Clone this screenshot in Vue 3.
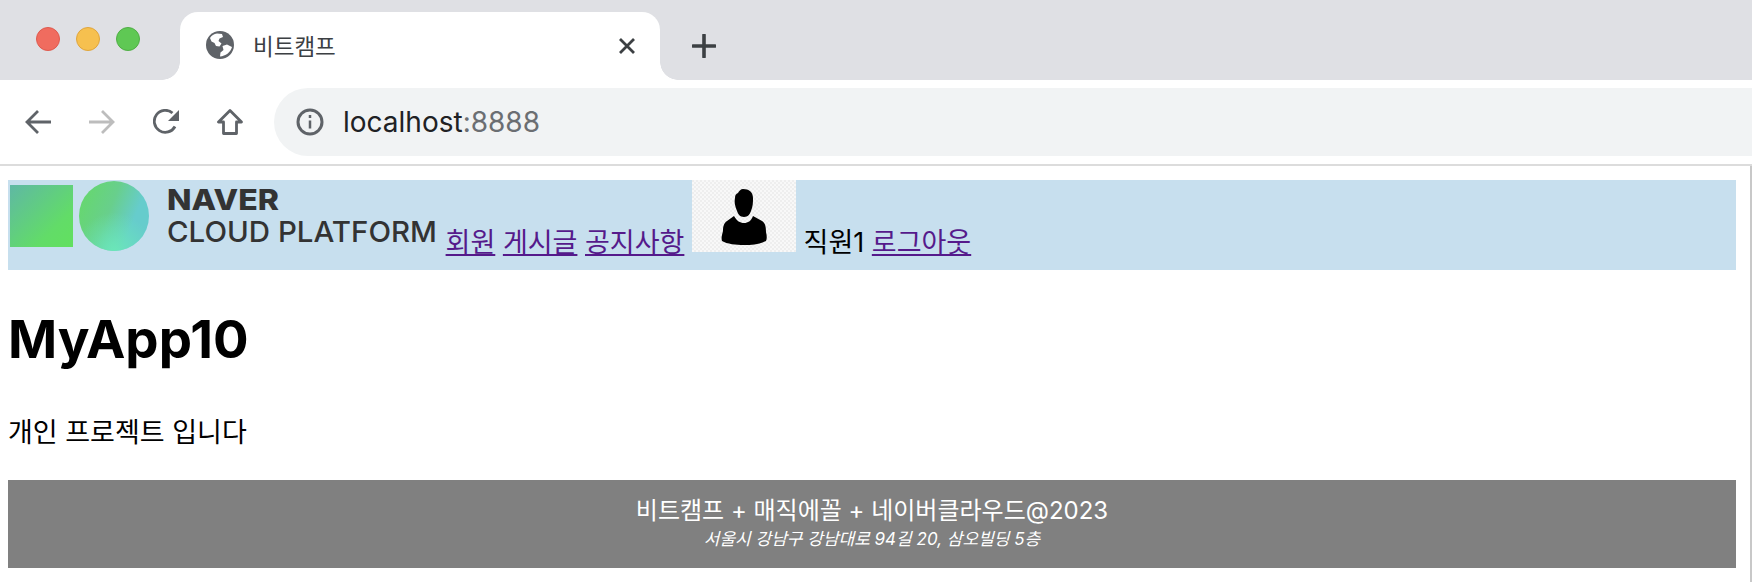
<template>
  <div class="browser">
    <div class="tabstrip">
      <div class="lights">
        <span class="light red"></span>
        <span class="light yellow"></span>
        <span class="light green"></span>
      </div>
      <div class="tab">
        <svg class="globe" width="28" height="28" viewBox="0 0 28 28">
          <circle cx="14" cy="14" r="14" fill="#5f6368" />
          <path d="M11 2.500c-3 .5-5.500 2-7 4.500l1.500 3.500 3 1.500 1.500 3 3.500.5 2-3-3-2.500 1-2.500 3.500-1.500-1-3zM26 16l-5-2.500-4.500 1.500 1 4-3 2.500-.5 4c5.500-.5 10.500-4 12-9.500z" fill="#fff" />
        </svg>
        <span class="tab-title">비트캠프</span>
        <svg class="tab-close" width="18" height="18" viewBox="0 0 18 18">
          <path d="M2 2l14 14M16 2L2 16" stroke="#3c4043" stroke-width="2.800" fill="none" />
        </svg>
      </div>
      <svg class="new-tab" width="24" height="24" viewBox="0 0 24 24">
        <path d="M12 1v22M1 12h22" stroke="#3c4043" stroke-width="3.600" stroke-linecap="round" fill="none" />
      </svg>
    </div>
    <div class="toolbar">
      <div class="nav-icons">
        <svg width="26" height="26" viewBox="0 0 26 26">
          <path d="M26 13H2M13 2L2 13l11 11" stroke="#5f6368" stroke-width="2.800" fill="none" />
        </svg>
        <svg width="26" height="26" viewBox="0 0 26 26">
          <path d="M0 13h24M13 2l11 11-11 11" stroke="#bdbdbd" stroke-width="2.800" fill="none" />
        </svg>
        <svg width="26" height="26" viewBox="0 0 26 26">
          <path d="M22 17.500A11 11 0 1 1 19.500 4" stroke="#5f6368" stroke-width="2.800" fill="none" />
          <path d="M26 1v11H15z" fill="#5f6368" />
        </svg>
        <svg width="26" height="26" viewBox="0 0 26 26">
          <path d="M13 1.500L1.500 13H6.500V24.500H19.500V13H24.500z" stroke="#5f6368" stroke-width="2.800" fill="none" stroke-linejoin="round" />
        </svg>
      </div>
      <div class="omnibox">
        <svg class="info" width="28" height="28" viewBox="0 0 28 28">
          <circle cx="14" cy="14" r="12" stroke="#5f6368" stroke-width="3" fill="none" />
          <path d="M14 12.500v8M14 7v3" stroke="#5f6368" stroke-width="2.500" fill="none" />
        </svg>
        <span class="url">localhost<span class="port">:8888</span></span>
      </div>
    </div>
    <div class="page">
      <div class="header">
        <svg class="logo" width="430" height="72" viewBox="0 0 430 72">
          <defs>
            <linearGradient id="sq" x1="0" y1="0" x2="1" y2="1">
              <stop offset="0" stop-color="#5fb8a4" />
              <stop offset="0.7" stop-color="#62dc68" />
              <stop offset="1" stop-color="#62e05f" />
            </linearGradient>
            <linearGradient id="ci" x1="0" y1="0.2" x2="1" y2="0.6">
              <stop offset="0" stop-color="#66d86c" />
              <stop offset="0.45" stop-color="#68cf8c" />
              <stop offset="0.8" stop-color="#66cccc" />
            </linearGradient>
            <radialGradient id="ci2" cx="0.5" cy="1" r="0.55">
              <stop offset="0" stop-color="#6be8b8" stop-opacity="0.95" />
              <stop offset="1" stop-color="#6be8b8" stop-opacity="0" />
            </radialGradient>
          </defs>
          <rect x="2" y="5" width="63" height="62" fill="url(#sq)" />
          <circle cx="106" cy="36" r="35" fill="url(#ci)" />
          <circle cx="106" cy="36" r="35" fill="url(#ci2)" />
          <text class="logo-top" x="159" y="30" textLength="112" lengthAdjust="spacingAndGlyphs">NAVER</text>
          <text class="logo-bottom" x="159" y="62" textLength="270" lengthAdjust="spacingAndGlyphs">CLOUD PLATFORM</text>
        </svg> <a href="#">회원</a> <a href="#">게시글</a> <a href="#">공지사항</a> <svg class="avatar" width="104" height="72" viewBox="0 0 104 72">
          <defs>
            <pattern id="chk" width="4" height="4" patternUnits="userSpaceOnUse">
              <rect width="4" height="4" fill="#f8f8f8" />
              <rect width="2" height="2" fill="#eeeeee" />
              <rect x="2" y="2" width="2" height="2" fill="#eeeeee" />
            </pattern>
          </defs>
          <rect width="104" height="72" fill="url(#chk)" />
          <path d="M51 9c6 0 10 3 10 9 0 4 0 8-2 13-1 3-3 6-7 6s-6-3-7-6c-2-5-3-9-2-13 0-3 1-4 3-5 1-2 3-4 5-4z" fill="#000" />
          <path d="M42 36c3 5 6 7 10 7s7-2 9-7l9 5c3 2 4 5 4 11 1 4 1 7 0 9-6 3-14 4-22 4s-17-1-22-4c-1-3 0-6 1-10 0-5 1-8 4-10z" fill="#000" />
        </svg> <span>직원1</span> <a href="#">로그아웃</a>
      </div>
      <h1>MyApp10</h1>
      <p class="intro">개인 프로젝트 입니다</p>
      <div class="footer">
        <div class="footer-title">비트캠프 + 매직에꼴 + 네이버클라우드@2023</div>
        <address>서울시 강남구 강남대로 94길 20, 삼오빌딩 5층</address>
      </div>
    </div>
  </div>
</template>

<script setup>
</script>

<style>
html, body {
  margin: 0;
  background: #fff;
  overflow: hidden;
}
</style>

<style scoped>
.browser {
  width: 1752px;
  height: 582px;
  display: flex;
  flex-direction: column;
  overflow: hidden;
  font-family: Inter, "Noto Sans CJK KR", sans-serif;
  color: #000;
}
.tabstrip {
  height: 80px;
  flex: none;
  background: #dfe0e4;
  display: flex;
  align-items: flex-end;
}
.lights {
  width: 180px;
  height: 80px;
  flex: none;
  display: flex;
  gap: 16px;
  padding: 27px 0 0 36px;
  box-sizing: border-box;
}
.light {
  width: 24px;
  height: 24px;
  border-radius: 50%;
  box-sizing: border-box;
}
.red { background: #f06c5f; border: 1px solid #df5a4e; }
.yellow { background: #f6c04f; border: 1px solid #e0a53c; }
.green { background: #5fc854; border: 1px solid #50ae45; }
.tab {
  position: relative;
  width: 480px;
  height: 68px;
  flex: none;
  background: #fff;
  border-radius: 18px 18px 0 0;
  display: flex;
  align-items: center;
  padding: 0 24px 0 26px;
  box-sizing: border-box;
}
.tab::before, .tab::after {
  content: "";
  position: absolute;
  bottom: 0;
  width: 18px;
  height: 18px;
}
.tab::before {
  left: -18px;
  background: radial-gradient(circle at 0 0, transparent 17.500px, #fff 18px);
}
.tab::after {
  right: -18px;
  background: radial-gradient(circle at 100% 0, transparent 17.500px, #fff 18px);
}
.globe { flex: none; margin-top: -2px; }
.tab-title {
  font-size: 22.500px;
  color: #3c4043;
  margin-left: 19px;
  margin-top: -2px;
  flex: 1;
}
.tab-close { margin-top: -1px; }
.new-tab { margin: 0 0 22px 32px; }
.toolbar {
  height: 84px;
  flex: none;
  background: #fff;
  border-bottom: 2px solid #dcdcdc;
  display: flex;
  align-items: center;
}
.nav-icons {
  width: 274px;
  flex: none;
  display: flex;
  align-items: center;
  gap: 38px;
  padding-left: 25px;
  box-sizing: border-box;
}
.omnibox {
  flex: 1;
  height: 68px;
  background: #f1f3f4;
  border-radius: 34px 0 0 34px;
  display: flex;
  align-items: center;
  padding-left: 22px;
}
.info { margin-right: 19px; }
.url {
  font-size: 28px;
  color: #202124;
}
.port { color: #6b6e72; }
.page {
  flex: 1;
  padding: 14px 14px 0 8px;
  border-right: 2px solid #c8c8c8;
}
.header {
  height: 90px;
  background: #c7dfee;
  font-size: 27px;
  line-height: 90px;
  white-space: nowrap;
}
.logo, .avatar {
  vertical-align: baseline;
}
.header a { color: #551a8b; text-decoration: underline; }
.logo-top, .logo-bottom {
  font-family: Inter, sans-serif;
  font-size: 29px;
  fill: #333;
}
.logo-top { font-weight: 800; }
.logo-bottom { font-weight: 500; }
h1 {
  font-size: 52.800px;
  font-weight: 700;
  line-height: 64px;
  margin: 37px 0 0;
}
.intro {
  font-size: 27px;
  line-height: 38px;
  margin: 43px 0 0;
}
.footer {
  margin-top: 28px;
  height: 88px;
  background: #808080;
  color: #fff;
  text-align: center;
  padding-top: 14px;
  box-sizing: border-box;
}
.footer-title {
  font-size: 24px;
  line-height: 33px;
}
address {
  font-size: 17px;
  line-height: 24px;
  font-style: italic;
}
</style>
